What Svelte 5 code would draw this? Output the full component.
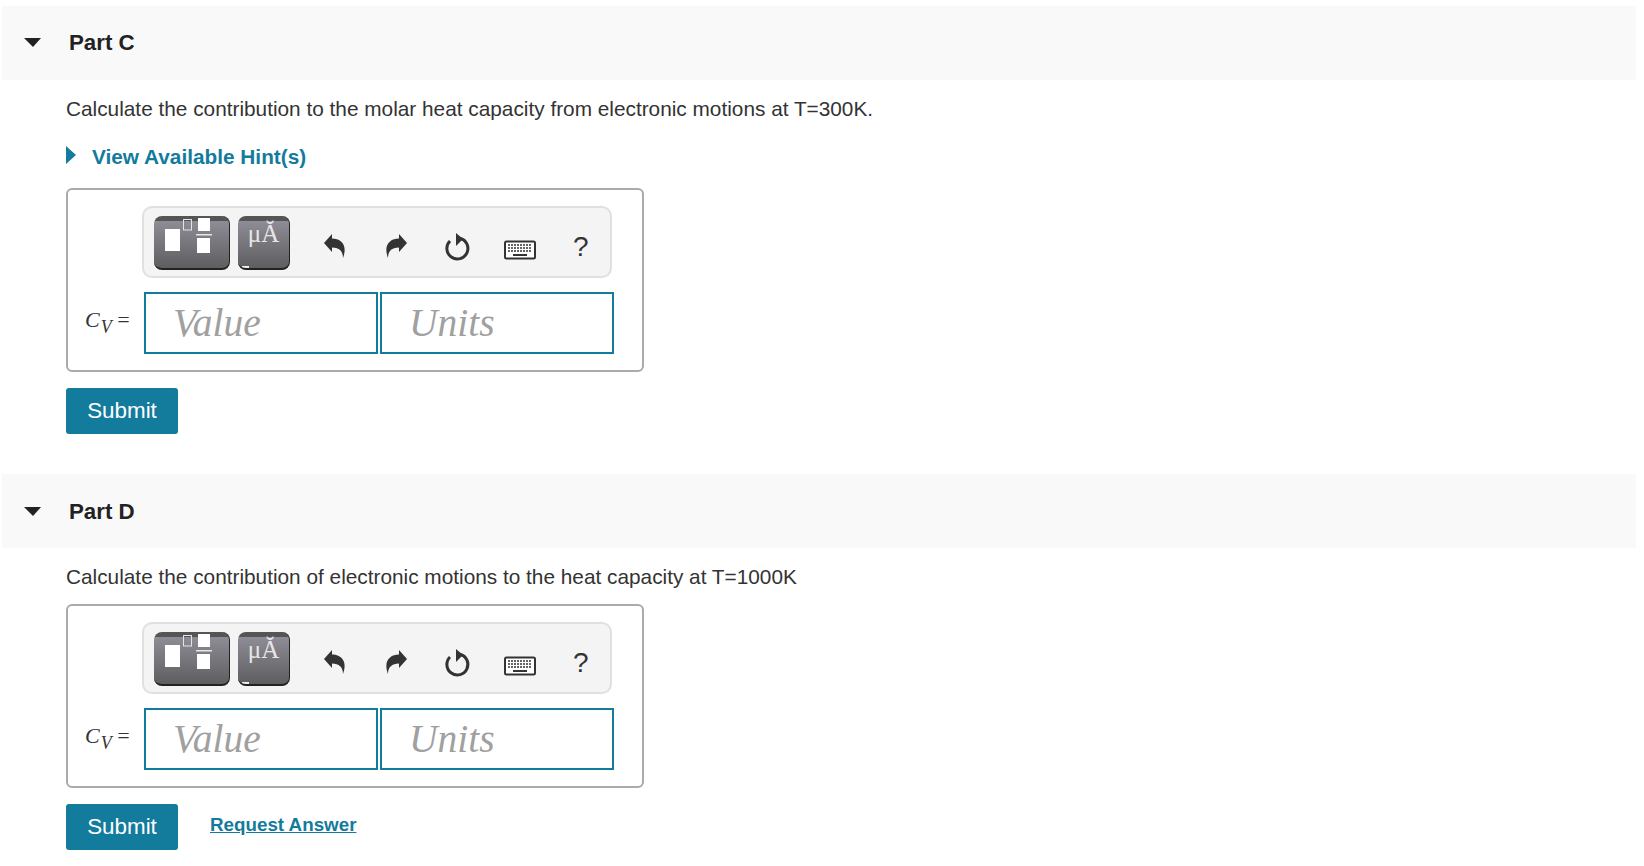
<script>
	const parts = [
		{
			name: 'Part C',
			text: 'Calculate the contribution to the molar heat capacity from electronic motions at T=300K.',
			hint: true,
			request: false
		},
		{
			name: 'Part D',
			text: 'Calculate the contribution of electronic motions to the heat capacity at T=1000K',
			hint: false,
			request: true
		}
	];
</script>

{#each parts as part}
	<section class="part">
		<header class="part-head">
			<span class="caret"></span>
			<h2>{part.name}</h2>
		</header>
		<div class="part-body">
			<p class="question">{part.text}</p>
			{#if part.hint}
				<div class="hint">
					<span class="hint-caret"></span>
					<span class="hint-label">View Available Hint(s)</span>
				</div>
			{/if}
			<div class="answer">
				<div class="toolbar">
					<div class="tpl-btn wide">
						<svg width="72" height="50" viewBox="0 0 72 50">
							<rect x="11" y="13" width="15" height="22" fill="#fff" />
							<rect x="29.500" y="3.500" width="8" height="10.500" fill="none" stroke="#e4e4e4" />
							<rect x="44" y="2" width="12" height="13" fill="#fff" />
							<rect x="42" y="18" width="16" height="1.500" fill="#e8e8e8" />
							<rect x="43" y="22" width="13" height="15" fill="#fff" />
						</svg>
					</div>
					<div class="tpl-btn narrow">
						<span class="symbols">μA&#774;</span>
						<span class="glint"></span>
					</div>
					<div class="tools">
						<svg class="undo" width="24" height="26" viewBox="0 0 24 26">
							<path d="M0 10 8 1v4.500C17 5.500 24 12 19 25 19 18 15 14.500 8 14.500V19z" fill="#333" />
						</svg>
						<svg class="redo" width="24" height="26" viewBox="0 0 24 26">
							<path d="M23 10 15 1v4.500C6 5.500-1 12 4 25 4 18 8 14.500 15 14.500V19z" fill="#333" />
						</svg>
						<svg class="reset" width="28" height="30" viewBox="0 0 28 30">
							<path d="M16 6.300A10.500 10.500 0 1 1 6 9" fill="none" stroke="#333" stroke-width="3" />
							<path d="M12 1 19 7 12 14z" fill="#333" />
						</svg>
						<svg class="keyboard" width="32" height="20" viewBox="0 0 32 20">
							<rect x="1" y="1.500" width="30" height="17" rx="1.500" fill="#fff" stroke="#333" stroke-width="2" />
							<path d="M4 5h24M4 8h24M4 11h24" stroke="#333" stroke-width="1.600" stroke-dasharray="2 1" />
							<path d="M9 15h14" stroke="#333" stroke-width="2" />
						</svg>
						<span class="help">?</span>
					</div>
				</div>
				<div class="entry">
					<span class="label"><i>C</i><sub>V</sub> =</span>
					<div class="field">Value</div>
					<div class="field">Units</div>
				</div>
			</div>
			<div class="actions">
				<button class="submit">Submit</button>
				{#if part.request}
					<span class="request">Request Answer</span>
				{/if}
			</div>
		</div>
	</section>
{/each}

<style>
	:global(body) {
		margin: 0;
		background: #fff;
		font-family: 'Liberation Sans', Arial, sans-serif;
		color: #333;
	}

	.part {
		padding: 6px 8px 0 2px;
	}

	.part + .part {
		margin-top: 40px;
		padding-top: 0;
	}

	.part-head {
		box-sizing: border-box;
		display: flex;
		align-items: center;
		height: 74px;
		background: #f9f9f9;
	}

	.part + .part .part-head {
		padding-top: 2px;
	}

	.caret {
		width: 0;
		height: 0;
		margin: -2px 0 0 22px;
		border-left: 9px solid transparent;
		border-right: 8px solid transparent;
		border-top: 9px solid #222;
	}

	h2 {
		margin: 0 0 0 28px;
		font-size: 22.3px;
		font-weight: 700;
		color: #222;
	}

	.part-body {
		padding-left: 64px;
	}

	.question {
		margin: 14px 0 0;
		font-size: 20.8px;
		line-height: 29px;
	}

	.hint {
		display: flex;
		align-items: center;
		height: 28px;
		margin-top: 20px;
	}

	.hint-caret {
		width: 0;
		height: 0;
		margin-top: -5px;
		border-top: 9px solid transparent;
		border-bottom: 9px solid transparent;
		border-left: 10px solid #137b9c;
	}

	.hint-label {
		margin-left: 16px;
		font-size: 20.8px;
		font-weight: 700;
		color: #137b9c;
	}

	.answer {
		box-sizing: border-box;
		width: 578px;
		height: 184px;
		margin-top: 17px;
		padding: 16px 0 0 74px;
		border: 2px solid #aaa;
		border-radius: 6px;
	}

	.part + .part .answer {
		margin-top: 13px;
	}

	.toolbar {
		box-sizing: border-box;
		display: flex;
		width: 470px;
		height: 72px;
		padding: 8px 0 0 10px;
		border: 2px solid #e0e0e0;
		border-radius: 10px;
		background: #f4f4f4;
	}

	.tpl-btn {
		box-sizing: border-box;
		height: 54px;
		overflow: hidden;
		border-bottom: 2px solid #222;
		border-right: 1px solid #222;
		border-radius: 8px;
		background: linear-gradient(#555 0 5px, #8e8c96 5px, #5e5e60 100%);
	}

	.wide {
		width: 76px;
	}

	.narrow {
		position: relative;
		width: 52px;
		margin-left: 8px;
		text-align: center;
	}

	.symbols {
		display: block;
		margin-top: 3px;
		font-family: 'Liberation Serif', serif;
		font-size: 25px;
		line-height: 30px;
		color: #e6e6e6;
	}

	.glint {
		position: absolute;
		left: 4px;
		bottom: 0;
		width: 7px;
		height: 2px;
		background: #eee;
	}

	.tools {
		position: relative;
		flex: 1;
		height: 54px;
		margin-top: 2px;
	}

	.tools > * {
		position: absolute;
	}

	.undo {
		left: 34px;
		top: 15px;
	}

	.redo {
		left: 94px;
		top: 15px;
	}

	.reset {
		left: 154px;
		top: 14px;
	}

	.keyboard {
		left: 214px;
		top: 22px;
	}

	.help {
		left: 283px;
		top: 13px;
		font-size: 28px;
		line-height: 32px;
		color: #333;
	}

	.entry {
		display: flex;
		align-items: center;
		margin: 14px 0 0 -57px;
	}

	.label {
		width: 59px;
		flex: none;
		margin-top: -6px;
		font-family: 'Liberation Serif', serif;
		font-size: 22px;
		white-space: nowrap;
	}

	.label sub {
		margin-left: 1px;
		font-size: 18px;
		font-style: italic;
		line-height: 0;
		vertical-align: -6px;
	}

	.field {
		box-sizing: border-box;
		width: 234px;
		height: 62px;
		margin-right: 2px;
		padding-left: 27px;
		border: 2px solid #137b9c;
		font-family: 'Liberation Serif', serif;
		font-size: 39.500px;
		font-style: italic;
		line-height: 58px;
		color: #a0a0a0;
	}

	.actions {
		display: flex;
		align-items: center;
		margin-top: 16px;
	}

	.submit {
		width: 112px;
		height: 46px;
		padding: 0;
		border: 0;
		border-radius: 3px;
		background: #137b9c;
		font-family: 'Liberation Sans', Arial, sans-serif;
		font-size: 22.4px;
		color: #fff;
	}

	.request {
		margin: -4px 0 0 32px;
		font-size: 18.8px;
		font-weight: 700;
		color: #137b9c;
		text-decoration: underline;
	}
</style>
